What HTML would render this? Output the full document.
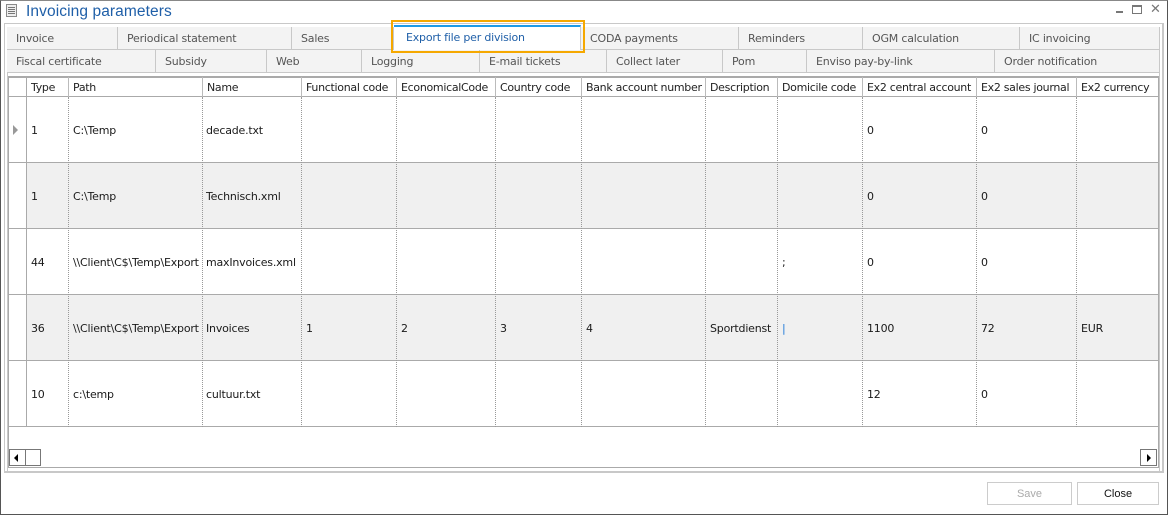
<!DOCTYPE html>
<html><head><meta charset="utf-8"><style>
*{box-sizing:border-box;margin:0;padding:0}
body{width:1168px;height:515px;background:#fff;font-family:"DejaVu Sans","Liberation Sans",sans-serif;font-size:11px;color:#1a1a1a;position:relative;overflow:hidden}
.a{position:absolute}
.win{left:0;top:0;width:1168px;height:515px;border:1px solid #555;border-top:1px solid #888}
.title{left:26px;top:3px;font-size:15.5px;color:#1f5fa8;font-family:"Liberation Sans",sans-serif;letter-spacing:0.1px}
.tab{position:absolute;height:23px;background:#f3f3f3;border-right:1px solid #c8c8c8;border-bottom:1px solid #c8c8c8;color:#555;font-size:11px;line-height:24px;padding-left:9px;white-space:nowrap;letter-spacing:-0.2px}
.hd{position:absolute;top:77px;height:20px;line-height:21px;padding-left:4px;font-size:11px;color:#222;white-space:nowrap;border-left:1px solid #bbb;letter-spacing:-0.3px}
.row{position:absolute;left:8px;width:1150px;height:66px;border-bottom:1px solid #aaa}
.cell{position:absolute;top:1px;height:65px;line-height:65px;padding-left:4px;white-space:nowrap;letter-spacing:-0.2px}
.vl{position:absolute;top:97px;height:330px;border-left:1px dotted #999}
.btn{position:absolute;top:482px;height:23px;border:1px solid #ccc;background:#fff;text-align:center;line-height:22px;font-size:11px;font-family:"Liberation Sans",sans-serif}
</style></head><body>
<div class="a win"></div>
<div class="a" style="left:6px;top:4px;width:11px;height:13px;border:1px solid #8a8a8a;background:#eee"></div>
<div class="a" style="left:8px;top:7px;width:7px;height:1px;background:#777;box-shadow:0 2px 0 #777,0 4px 0 #777,0 6px 0 #777"></div>
<div class="a title">Invoicing parameters</div>
<div class="a" style="left:1116px;top:11px;width:7px;height:2px;background:#777"></div>
<div class="a" style="left:1132px;top:5px;width:10px;height:9px;border:1px solid #777;border-top-width:2px"></div>
<div class="a" style="left:1150px;top:2px;font-size:13px;color:#777">✕</div>
<div class="a" style="left:4px;top:23px;width:1160px;height:450px;border:1px solid #c8c8c8;border-bottom-width:2px;border-right-width:2px"></div>
<div class="a" style="left:7px;top:27px;width:1153px;height:445px;border:1px solid #c8c8c8"></div>
<div class="tab" style="left:7px;top:27px;width:111px">Invoice</div>
<div class="tab" style="left:118px;top:27px;width:174px">Periodical statement</div>
<div class="tab" style="left:292px;top:27px;width:102px">Sales</div>
<div class="tab" style="left:581px;top:27px;width:158px">CODA payments</div>
<div class="tab" style="left:739px;top:27px;width:124px">Reminders</div>
<div class="tab" style="left:863px;top:27px;width:157px">OGM calculation</div>
<div class="tab" style="left:1020px;top:27px;width:140px">IC invoicing</div>
<div class="tab" style="left:7px;top:50px;width:149px">Fiscal certificate</div>
<div class="tab" style="left:156px;top:50px;width:111px">Subsidy</div>
<div class="tab" style="left:267px;top:50px;width:95px">Web</div>
<div class="tab" style="left:362px;top:50px;width:118px">Logging</div>
<div class="tab" style="left:480px;top:50px;width:127px">E-mail tickets</div>
<div class="tab" style="left:607px;top:50px;width:116px">Collect later</div>
<div class="tab" style="left:723px;top:50px;width:84px">Pom</div>
<div class="tab" style="left:807px;top:50px;width:188px">Enviso pay-by-link</div>
<div class="tab" style="left:995px;top:50px;width:165px">Order notification</div>
<div class="a" style="left:394px;top:25px;width:187px;height:25px;background:#fff;border-top:2px solid #1e9be8;border-right:1px solid #ccc"></div>
<div class="a" style="left:406px;top:31px;color:#1f5fa8;letter-spacing:-0.2px">Export file per division</div>
<div class="a" style="left:391px;top:20px;width:194px;height:33px;border:2px solid #f5a800"></div>
<div class="a" style="left:8px;top:76px;width:1151px;height:392px;border:1px solid #aaa;border-top:2px solid #aaa"></div>
<div class="a" style="left:8px;top:96px;width:1150px;height:1px;background:#aaa"></div>
<div class="hd" style="left:26px">Type</div>
<div class="hd" style="left:68px">Path</div>
<div class="hd" style="left:202px">Name</div>
<div class="hd" style="left:301px">Functional code</div>
<div class="hd" style="left:396px">EconomicalCode</div>
<div class="hd" style="left:495px">Country code</div>
<div class="hd" style="left:581px">Bank account number</div>
<div class="hd" style="left:705px">Description</div>
<div class="hd" style="left:777px">Domicile code</div>
<div class="hd" style="left:862px">Ex2 central account</div>
<div class="hd" style="left:976px">Ex2 sales journal</div>
<div class="hd" style="left:1076px">Ex2 currency</div>
<div class="row" style="top:97px"></div>
<div class="row" style="top:163px"><div class="a" style="left:18px;top:0;width:1132px;height:65px;background:#f0f0f0"></div></div>
<div class="row" style="top:229px"></div>
<div class="row" style="top:295px"><div class="a" style="left:18px;top:0;width:1132px;height:65px;background:#f0f0f0"></div></div>
<div class="row" style="top:361px"></div>
<div class="a" style="left:26px;top:77px;width:1px;height:350px;background:#aaa"></div>
<div class="vl" style="left:68px"></div><div class="vl" style="left:202px"></div><div class="vl" style="left:301px"></div><div class="vl" style="left:396px"></div><div class="vl" style="left:495px"></div><div class="vl" style="left:581px"></div><div class="vl" style="left:705px"></div><div class="vl" style="left:777px"></div><div class="vl" style="left:862px"></div><div class="vl" style="left:976px"></div><div class="vl" style="left:1076px"></div>
<div class="a" style="left:13px;top:125px;width:0;height:0;border-left:5px solid #999;border-top:5px solid transparent;border-bottom:5px solid transparent"></div>
<div class="a" style="top:97px;left:0">
<div class="cell" style="left:27px">1</div><div class="cell" style="left:69px">C:\Temp</div><div class="cell" style="left:202px">decade.txt</div><div class="cell" style="left:863px">0</div><div class="cell" style="left:977px">0</div></div>
<div class="a" style="top:163px;left:0">
<div class="cell" style="left:27px">1</div><div class="cell" style="left:69px">C:\Temp</div><div class="cell" style="left:202px">Technisch.xml</div><div class="cell" style="left:863px">0</div><div class="cell" style="left:977px">0</div></div>
<div class="a" style="top:229px;left:0">
<div class="cell" style="left:27px">44</div><div class="cell" style="left:69px">\\Client\C$\Temp\Export</div><div class="cell" style="left:202px">maxInvoices.xml</div><div class="cell" style="left:778px">;</div><div class="cell" style="left:863px">0</div><div class="cell" style="left:977px">0</div></div>
<div class="a" style="top:295px;left:0">
<div class="cell" style="left:27px">36</div><div class="cell" style="left:69px">\\Client\C$\Temp\Export</div><div class="cell" style="left:202px">Invoices</div><div class="cell" style="left:302px">1</div><div class="cell" style="left:397px">2</div><div class="cell" style="left:496px">3</div><div class="cell" style="left:582px">4</div><div class="cell" style="left:706px">Sportdienst</div><div class="cell" style="left:778px;color:#1e7ad8">|</div><div class="cell" style="left:863px">1100</div><div class="cell" style="left:977px">72</div><div class="cell" style="left:1077px">EUR</div></div>
<div class="a" style="top:361px;left:0">
<div class="cell" style="left:27px">10</div><div class="cell" style="left:69px">c:\temp</div><div class="cell" style="left:202px">cultuur.txt</div><div class="cell" style="left:863px">12</div><div class="cell" style="left:977px">0</div></div>
<div class="a" style="left:9px;top:449px;width:17px;height:17px;border:1px solid #777"></div>
<div class="a" style="left:14px;top:454px;border-right:4px solid #000;border-top:4px solid transparent;border-bottom:4px solid transparent"></div>
<div class="a" style="left:25px;top:449px;width:16px;height:17px;border:1px solid #777"></div>
<div class="a" style="left:1140px;top:449px;width:17px;height:17px;border:1px solid #777"></div>
<div class="a" style="left:1147px;top:454px;border-left:4px solid #000;border-top:4px solid transparent;border-bottom:4px solid transparent"></div>
<div class="btn" style="left:987px;width:85px;color:#aaa">Save</div>
<div class="btn" style="left:1077px;width:82px;color:#111">Close</div>
</body></html>
